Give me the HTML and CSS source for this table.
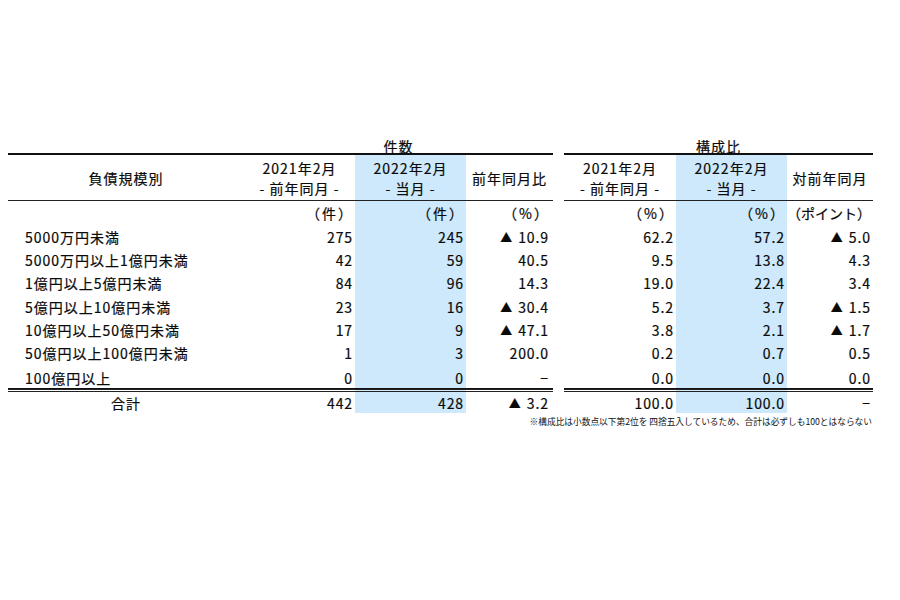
FILE: index.html
```html
<!DOCTYPE html>
<html lang="ja">
<head>
<meta charset="utf-8">
<title>負債規模別</title>
<link rel="stylesheet" href="styles.css">
</head>
<body>
<div class="page">
  <div class="tables">
    <table class="t tl">
      <colgroup><col class="c-label"><col class="c-num"><col class="c-num"><col class="c-ratio"></colgroup>
      <tr class="ttl"><td></td><td colspan="3">件数</td></tr>
      <tr class="hd">
        <th>負債規模別</th>
        <th>2021年2月<br>- 前年同月 -</th>
        <th class="b">2022年2月<br>- 当月 -</th>
        <th>前年同月比</th>
      </tr>
      <tr class="un"><td></td><td>（件）</td><td class="b">（件）</td><td>（%）</td></tr>
      <tr class="dr"><td class="lb">5000万円未満</td><td>275</td><td class="b">245</td><td><span class="tri">▲</span>10.9</td></tr>
      <tr class="dr"><td class="lb">5000万円以上1億円未満</td><td>42</td><td class="b">59</td><td>40.5</td></tr>
      <tr class="dr"><td class="lb">1億円以上5億円未満</td><td>84</td><td class="b">96</td><td>14.3</td></tr>
      <tr class="dr"><td class="lb">5億円以上10億円未満</td><td>23</td><td class="b">16</td><td><span class="tri">▲</span>30.4</td></tr>
      <tr class="dr"><td class="lb">10億円以上50億円未満</td><td>17</td><td class="b">9</td><td><span class="tri">▲</span>47.1</td></tr>
      <tr class="dr"><td class="lb">50億円以上100億円未満</td><td>1</td><td class="b">3</td><td>200.0</td></tr>
      <tr class="dr last"><td class="lb">100億円以上</td><td>0</td><td class="b">0</td><td class="dash">−</td></tr>
      <tr class="tot"><td class="tl-lab">合計</td><td>442</td><td class="b">428</td><td><span class="tri">▲</span>3.2</td></tr>
    </table>
    <table class="t tr">
      <colgroup><col class="c-num2"><col class="c-num"><col class="c-ratio2"></colgroup>
      <tr class="ttl"><td colspan="3">構成比</td></tr>
      <tr class="hd">
        <th>2021年2月<br>- 前年同月 -</th>
        <th class="b">2022年2月<br>- 当月 -</th>
        <th>対前年同月</th>
      </tr>
      <tr class="un"><td>（%）</td><td class="b">（%）</td><td class="pt">（ポイント）</td></tr>
      <tr class="dr"><td>62.2</td><td class="b">57.2</td><td><span class="tri">▲</span>5.0</td></tr>
      <tr class="dr"><td>9.5</td><td class="b">13.8</td><td>4.3</td></tr>
      <tr class="dr"><td>19.0</td><td class="b">22.4</td><td>3.4</td></tr>
      <tr class="dr"><td>5.2</td><td class="b">3.7</td><td><span class="tri">▲</span>1.5</td></tr>
      <tr class="dr"><td>3.8</td><td class="b">2.1</td><td><span class="tri">▲</span>1.7</td></tr>
      <tr class="dr"><td>0.2</td><td class="b">0.7</td><td>0.5</td></tr>
      <tr class="dr last"><td>0.0</td><td class="b">0.0</td><td>0.0</td></tr>
      <tr class="tot"><td>100.0</td><td class="b">100.0</td><td class="dash">−</td></tr>
    </table>
  </div>
  <p class="note">※構成比は小数点以下第2位を 四捨五入しているため、合計は必ずしも100とはならない</p>
</div>
</body>
</html>
```
FILE: styles.css
```css
html, body {
  margin: 0;
  padding: 0;
  background: #fff;
}
body {
  font-family: "Noto Sans CJK JP", "Noto Sans", sans-serif;
  color: #0a0a0a;
}
.page {
  width: 865px;
  padding: 137px 0 0 8px;
}
.tables {
  display: flex;
  gap: 11px;
  align-items: flex-start;
}
.t {
  border-collapse: separate;
  border-spacing: 0;
  table-layout: fixed;
  font-size: 14px;
  -webkit-text-stroke: 0.2px #0a0a0a;
}
.tl { width: 545px; }
.tr { width: 309px; }
.c-label { width: 236px; }
.c-num { width: 111px; }
.c-ratio { width: 87px; }
.c-num2 { width: 112px; }
.c-ratio2 { width: 86px; }

.t td, .t th {
  padding: 0;
  white-space: nowrap;
}
.ttl td {
  height: 16px;
  line-height: 16px;
  text-align: center;
  font-size: 14px;
  letter-spacing: 1px;
  vertical-align: bottom;
  position: relative;
  top: 1px;
}
.hd th {
  height: 45px;
  border-top: 2px solid #111;
  border-bottom: 1px solid #222;
  font-weight: 400;
  line-height: 20px;
  letter-spacing: 1px;
  text-align: center;
  vertical-align: middle;
  padding-top: 0;
}
.un td {
  height: 24px;
  text-align: right;
  padding-right: 1px;
  letter-spacing: 2px;
  vertical-align: middle;
}
.un td.pt { padding-right: 2px; letter-spacing: 0; }
.dr td {
  height: 23.3px;
  text-align: right;
  padding-right: 2px;
  letter-spacing: 0.9px;
  vertical-align: middle;
  padding-top: 0;
  box-sizing: border-box;
}
.dr td.lb {
  text-align: left;
  padding-left: 17px;
  padding-right: 0;
  letter-spacing: 1px;
}
.tl .dr td:nth-child(4),
.tl .tot td:nth-child(4) {
  padding-right: 4px;
}
.tl .un td:nth-child(4) {
  padding-right: 3px;
}
.tri {
  font-size: 12px;
  letter-spacing: 0;
  margin-right: 6px;
}
.dr.last td {
  border-bottom: 1px solid #111;
  padding-top: 3px;
}
.tot td {
  border-top: 3px double #222;
  height: 21px;
  box-sizing: border-box;
  text-align: right;
  padding-right: 2px;
  letter-spacing: 0.9px;
  padding-top: 1px;
  vertical-align: middle;
}
.tot td.tl-lab {
  text-align: center;
  letter-spacing: 1px;
  padding-right: 0;
}
.b {
  background: #cde9fb;
}
.note {
  margin: 3px 0 0;
  text-align: right;
  font-size: 8.7px;
  line-height: 11px;
  padding-right: 1px;
  color: #111;
}
```
